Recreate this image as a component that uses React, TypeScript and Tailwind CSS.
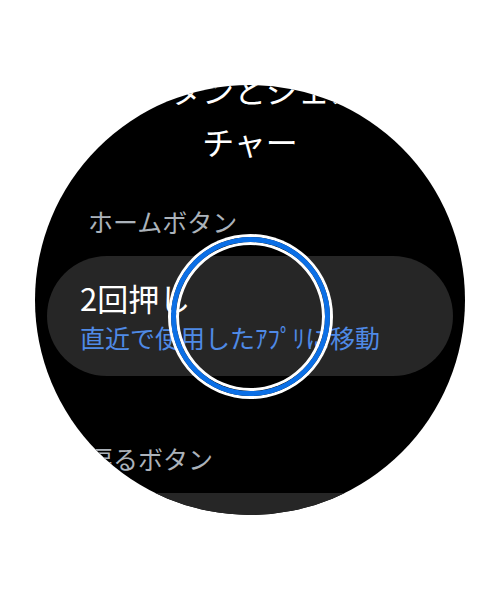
const font = { fontFamily: '"Noto Sans CJK JP", "Noto Sans", sans-serif' };

function SectionLabel({ children }: { children: string }) {
  return <p className="pl-[53px] text-[25px] leading-[28px] text-[#abb2ba]">{children}</p>;
}

function SettingCard({ title, value }: { title?: string; value?: string }) {
  return (
    <div className="mx-[12px] flex h-[120px] shrink-0 flex-col justify-center gap-[6px] rounded-full bg-[#262626] px-[33px]">
      {title ? <p className="text-[31px] leading-[36px] text-white">{title}</p> : null}
      {value ? <p className="text-[25px] leading-[30px] text-[#4f8ae6]">{value}</p> : null}
    </div>
  );
}

export default function App() {
  return (
    <div className="relative h-[600px] w-[500px] bg-white" style={font}>
      <div className="absolute left-[35px] top-[85px] h-[430px] w-[430px] overflow-hidden rounded-full bg-black">
        <div className="flex flex-col">
          <h1 className="mt-[-22px] px-[40px] text-center text-[32px] leading-[52px] text-white">
            ボタンとジェス
            <br />
            チャー
          </h1>
          <div className="mt-[40px]">
            <SectionLabel>ホームボタン</SectionLabel>
          </div>
          <div className="mt-[21px]">
            <SettingCard title="2回押し" value="直近で使用したｱﾌﾟﾘに移動" />
          </div>
          <div className="mt-[68px]">
            <SectionLabel>戻るボタン</SectionLabel>
          </div>
          <div className="mt-[21px]">
            <SettingCard />
          </div>
        </div>
      </div>

      {/* touch indicator */}
      <div className="absolute left-[171px] top-[237px] h-[159px] w-[159px] rounded-full border-[5px] border-[#0b6fe6] shadow-[0_0_0_3px_#fff,inset_0_0_0_3px_#fff]" />
    </div>
  );
}
